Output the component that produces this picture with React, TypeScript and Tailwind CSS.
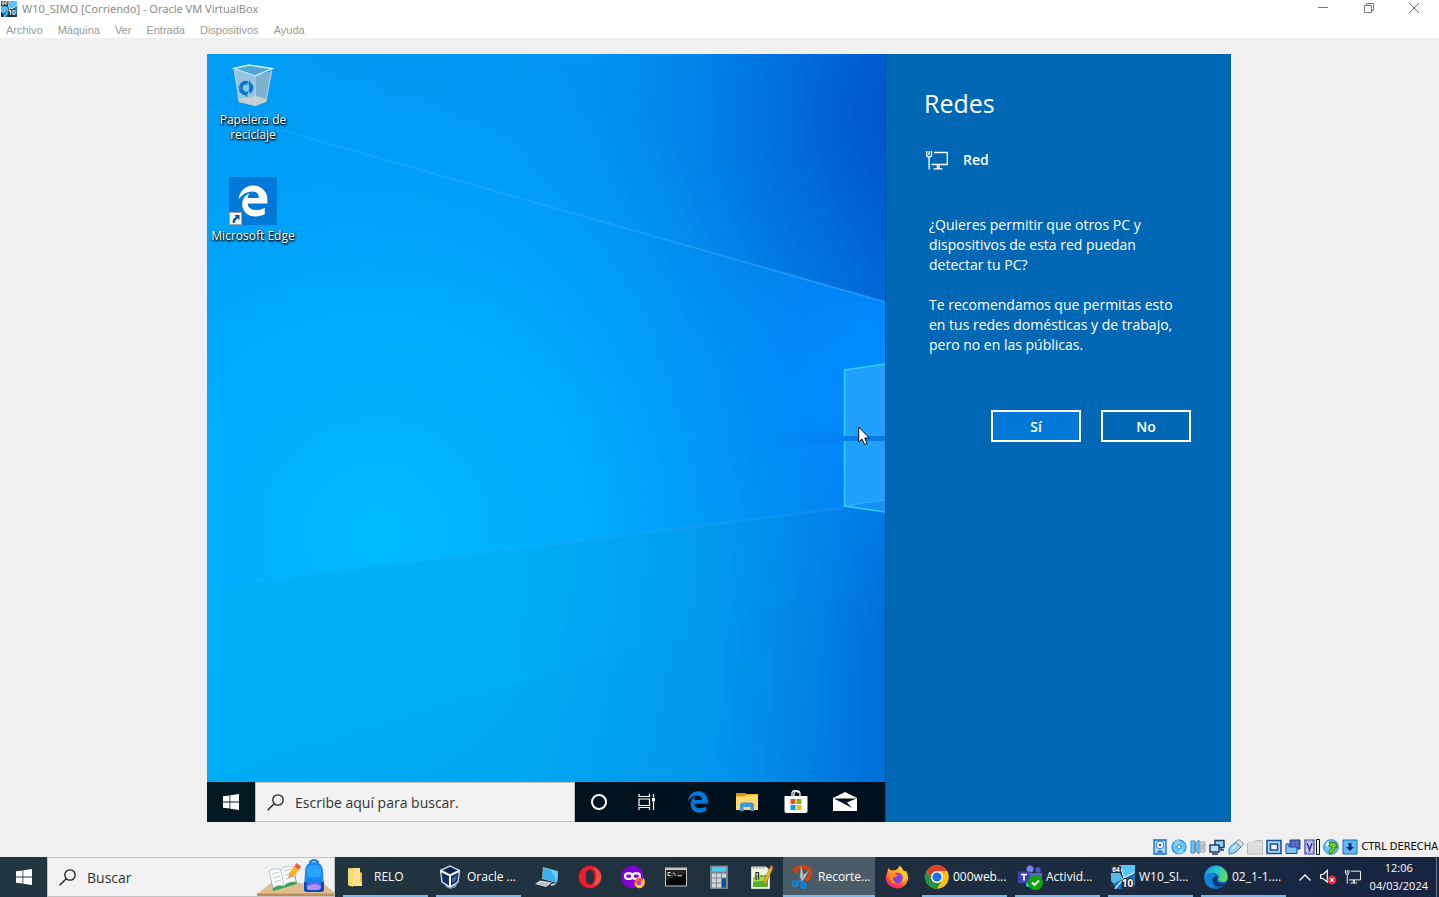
import type { ReactNode } from "react";
import { FaEdgeLegacy } from "react-icons/fa6";

type IconProps = { className?: string };

/* ---------- Shared glyphs ---------- */

function WindowsLogo({ className }: IconProps) {
  return (
    <svg viewBox="0 0 16 16" className={className} fill="currentColor" aria-hidden="true">
      <path d="M0 2.3 6.5 1.4V7.6H0zM7.3 1.3 16 0V7.6H7.3zM0 8.4H6.5V14.6L0 13.7zM7.3 8.4H16V16L7.3 14.7z" />
    </svg>
  );
}

function SearchGlyph({ className }: IconProps) {
  return (
    <svg viewBox="0 0 17 17" className={className} fill="none" stroke="currentColor" strokeWidth="1.3" aria-hidden="true">
      <circle cx="11" cy="6" r="5.2" />
      <path d="M7.2 9.7 0.6 16.3" />
    </svg>
  );
}

function NetworkGlyph({ className }: IconProps) {
  return (
    <svg viewBox="0 0 22 19" className={className} fill="none" stroke="currentColor" strokeWidth="1.3" aria-hidden="true">
      <path d="M0.7 0V4a2.400 2 0 0 0 4.800 0V0M3.100 0V4M3.100 6V18.500M8 1.500H21.300V13.500H5.500M11.500 13.500V17.500M7.500 17.800H16.500M13 13.500V17.500" />
    </svg>
  );
}

/* ---------- Wallpaper ---------- */

function Wallpaper() {
  return (
    <svg viewBox="0 0 678 728" preserveAspectRatio="none" className="absolute inset-0 h-full w-full" aria-hidden="true">
      <defs>
        <linearGradient id="base" x1="0" y1="0" x2="1" y2="0">
          <stop offset="0" stopColor="#009cf4" />
          <stop offset="0.45" stopColor="#0098f2" />
          <stop offset="0.75" stopColor="#008aec" />
          <stop offset="0.9" stopColor="#007ae2" />
          <stop offset="1" stopColor="#0066d6" />
        </linearGradient>
        <radialGradient id="cyan" gradientUnits="userSpaceOnUse" cx="170" cy="480" r="500">
          <stop offset="0" stopColor="#00baff" />
          <stop offset="0.4" stopColor="#00b0ff" stopOpacity="0.9" />
          <stop offset="0.75" stopColor="#00a4fc" stopOpacity="0.45" />
          <stop offset="1" stopColor="#009cf8" stopOpacity="0" />
        </radialGradient>
        <radialGradient id="dark" gradientUnits="userSpaceOnUse" cx="720" cy="60" r="340">
          <stop offset="0" stopColor="#004ec6" />
          <stop offset="0.35" stopColor="#005ed2" stopOpacity="0.65" />
          <stop offset="1" stopColor="#0080e8" stopOpacity="0" />
        </radialGradient>
        <radialGradient id="glow" gradientUnits="userSpaceOnUse" cx="690" cy="320" r="260">
          <stop offset="0" stopColor="#0090ff" />
          <stop offset="0.4" stopColor="#008cff" stopOpacity="0.75" />
          <stop offset="1" stopColor="#0094fa" stopOpacity="0" />
        </radialGradient>
        <linearGradient id="beam" x1="0" y1="0" x2="1" y2="0">
          <stop offset="0" stopColor="#30b4ff" stopOpacity="0.25" />
          <stop offset="0.6" stopColor="#30a8ff" stopOpacity="0.5" />
          <stop offset="1" stopColor="#2a9cff" stopOpacity="0.8" />
        </linearGradient>
        <linearGradient id="lower" x1="0" y1="0" x2="1" y2="0">
          <stop offset="0" stopColor="#00b0f6" stopOpacity="0.75" />
          <stop offset="0.45" stopColor="#00acf2" stopOpacity="0.7" />
          <stop offset="0.75" stopColor="#009aec" stopOpacity="0.6" />
          <stop offset="1" stopColor="#0074dc" stopOpacity="0.5" />
        </linearGradient>
        <linearGradient id="gap" x1="0" y1="0" x2="1" y2="0">
          <stop offset="0" stopColor="#0078e6" stopOpacity="0" />
          <stop offset="1" stopColor="#0078e6" stopOpacity="0.3" />
        </linearGradient>
      </defs>
      <rect width="678" height="728" fill="url(#base)" />
      <rect width="678" height="728" fill="url(#cyan)" />
      <rect width="678" height="728" fill="url(#dark)" />
      <path d="M0 55 678 248V728H0z" fill="url(#glow)" />
      <path d="M0 534 637 453 678 448V728H0z" fill="url(#lower)" />
      <path d="M60 705 678 521V728H0z" fill="#0080dc" opacity="0.06" />
      <path d="M0 54 678 247V249L0 56z" fill="url(#beam)" />
      <path d="M0 533 637 452V455L0 536z" fill="url(#beam)" opacity="0.4" />
      <path d="M540 378H637V391H540z" fill="url(#gap)" />
      <path d="M637 316 678 310V382H637zM637 387H678V458L637 452z" fill="#22a0ff" />
      <path d="M637 382H678V387H637z" fill="#007ee6" />
      <path d="M637 452 678 446V458z" fill="#1690f2" />
      <path d="M678 310 637.5 316V382M637.5 387V452L678 458" fill="none" stroke="#30ccff" strokeWidth="1.6" />
      <path d="M637 452 678 446" stroke="#30c0ff" strokeWidth="1" opacity="0.7" />
    </svg>
  );
}

/* ---------- Desktop icons ---------- */

function RecycleBin() {
  return (
    <svg viewBox="0 0 48 48" className="size-12" aria-hidden="true">
      <path d="M5 8 10 41 27 45 37 40 43 10 26 16z" fill="#93c4e0" />
      <path d="M25 15 27 45 37 41 43 10z" fill="#7eb0d0" />
      <path d="M9.500 38 27 35 37.500 38 37 41 26 45 10 41z" fill="#cfcfd1" opacity="0.9" />
      <path d="M5 7.500 20 4 43 7.500 26 15z" fill="#4fa6d4" />
      <path d="M5 7.500 20 4 43 7.500 26 15z" fill="none" stroke="#d9eef8" strokeWidth="1.300" />
      <path d="M5 8 10 40M43 8 37 40M26 15 26.500 44" fill="none" stroke="#c0dff0" strokeWidth="0.800" />
      <circle cx="17" cy="27" r="5.300" fill="none" stroke="#0874cc" strokeWidth="3.800" strokeDasharray="8 3.100" transform="rotate(-160 17 27)" />
      <path d="M20 19 24 25.500 19.500 24zM18 36.500 15 32.500 19 30zM8.500 26 13 24 14.500 28z" fill="#0874cc" />
    </svg>
  );
}

function DesktopShortcut({ label, children }: { label: string; children: ReactNode }) {
  return (
    <button type="button" className="flex min-h-[116px] w-[92px] flex-col items-center gap-[3px]">
      {children}
      <span className="px-1 text-center text-[12px] leading-[15px] text-white [text-shadow:1px_1px_2px_#000,0_1px_2px_#000]">
        {label}
      </span>
    </button>
  );
}

/* ---------- Guest taskbar icons ---------- */

const TaskViewIcon = () => (
  <svg viewBox="0 0 18 16" className="h-4 w-[18px]" fill="none" stroke="#fff" strokeWidth="1.200" aria-hidden="true">
    <path d="M1 0V2.500H11.500V0M1 5H11.500V11.500H1zM1 16V13.500H11.500V16M15.500 0V3.500M15.500 8V16" />
    <path d="M14 4H17V7.500H14z" fill="#fff" stroke="none" />
  </svg>
);

const ExplorerIcon = () => (
  <svg viewBox="0 0 22 18" className="h-[18px] w-[22px]" aria-hidden="true">
    <path d="M0 0H9L10 1H22V17H0z" fill="#f0b429" />
    <path d="M0 0H9L10 1.500 9 3.500H0z" fill="#d99408" />
    <path d="M0 3.500H9L10 2H22V17H0z" fill="#ffd867" />
    <path d="M4 18V11L6 9.500H16L18 11V18H14.500V14H7.500V18z" fill="#3d9ae0" />
  </svg>
);

const StoreIcon = () => (
  <svg viewBox="0 0 24 24" className="size-6" aria-hidden="true">
    <path d="M8 7V4a3 3 0 0 1 6-1M10 7V4a3 3 0 0 1 6 0V7" fill="none" stroke="#fff" strokeWidth="1.300" />
    <path d="M0.500 6H23.500V21a2 2 0 0 1-2 2H2.500a2 2 0 0 1-2-2z" fill="#fff" />
    <path d="M6.500 9H11.500V14H6.500z" fill="#f04c22" />
    <path d="M12.500 9H17.500V14H12.500z" fill="#7cb900" />
    <path d="M6.500 15H11.500V20H6.500z" fill="#00a2ec" />
    <path d="M12.500 15H17.500V20H12.500z" fill="#fdb813" />
  </svg>
);

const MailIcon = () => (
  <svg viewBox="0 0 24 20" className="h-5 w-6" aria-hidden="true">
    <path d="M0 6 12 0 24 6V19H0z" fill="#fff" />
    <path d="M1 6.500H23.500L14 10.500 19 16z" fill="#00121d" />
  </svg>
);

function GuestTaskbar() {
  return (
    <div className="relative flex h-10 items-stretch bg-linear-to-r from-[#001922] to-[#000f1c] text-white">
      <button type="button" aria-label="Inicio" className="flex w-12 items-center justify-center">
        <WindowsLogo className="size-4" />
      </button>
      <label className="flex min-w-0 max-w-[320px] flex-1 items-center border border-[#c3c3c3] bg-[#f2f2f2] pl-[11px] text-[#1c1c1c]">
        <SearchGlyph className="size-[17px] shrink-0" />
        <input
          type="text"
          aria-label="Buscar en el equipo"
          placeholder="Escribe aquí para buscar."
          className="min-w-0 flex-1 bg-transparent pl-[11px] text-[14px] outline-none placeholder:text-[#333]"
        />
      </label>
      <button type="button" aria-label="Cortana" className="flex w-12 items-center justify-center">
        <span className="size-4 rounded-full border-2 border-white" />
      </button>
      <button type="button" aria-label="Vista de tareas" className="flex w-12 items-center justify-center">
        <TaskViewIcon />
      </button>
      <button type="button" aria-label="Edge" className="ml-[3px] flex w-12 items-center justify-center">
        <FaEdgeLegacy className="size-[22px] text-[#0078d7]" />
      </button>
      <button type="button" aria-label="Explorador" className="flex w-[49px] items-center justify-center">
        <ExplorerIcon />
      </button>
      <button type="button" aria-label="Tienda" className="flex w-[49px] items-center justify-center">
        <StoreIcon />
      </button>
      <button type="button" aria-label="Correo" className="flex w-[49px] items-center justify-center">
        <MailIcon />
      </button>
    </div>
  );
}

/* ---------- Network flyout ---------- */

function NetworkPanel() {
  return (
    <aside className="border-l border-[#004f91] bg-[#0067b4] pt-[33px] pr-10 pl-[38px] text-white">
      <h1 className="text-[25px] leading-8 font-normal">Redes</h1>
      <div className="mt-[29px] flex items-center gap-[15px] pl-[2px]">
        <NetworkGlyph className="h-[19px] w-[22px]" />
        <h2 className="text-[14px] leading-6 font-semibold">Red</h2>
      </div>
      <div className="mt-[43px] flex flex-col gap-5 pl-[5px] text-[14px] leading-5">
        <p>
          ¿Quieres permitir que otros PC y<br />
          dispositivos de esta red puedan<br />
          detectar tu PC?
        </p>
        <p>
          Te recomendamos que permitas esto<br />
          en tus redes domésticas y de trabajo,<br />
          pero no en las públicas.
        </p>
      </div>
      <div className="mt-[55px] flex justify-end gap-5 text-[14px] font-semibold">
        <button type="button" className="h-8 w-[90px] border-2 border-white bg-[#0078d7]">Sí</button>
        <button type="button" className="h-8 w-[90px] border-2 border-white">No</button>
      </div>
    </aside>
  );
}

/* ---------- Machine status icons ---------- */

const statusIcons: { name: string; art: ReactNode }[] = [
  {
    name: "Disco duro",
    art: (
      <>
        <path d="M2 1H14V15H2z" fill="#a9dcfc" stroke="#1c66c4" strokeWidth="1.300" />
        <circle cx="8" cy="6" r="3.800" fill="#fff" stroke="#2e7cd0" />
        <circle cx="8" cy="6" r="1.300" fill="#1c66c4" />
        <path d="M4 13.500 8 11 12 13.500z" fill="#1c66c4" />
      </>
    ),
  },
  {
    name: "Unidad óptica",
    art: (
      <>
        <circle cx="8" cy="8" r="7" fill="#69c8fa" stroke="#2384d6" strokeWidth="1.200" />
        <path d="M8 8 3 3A7 7 0 0 1 8 1zM8 8 13 13A7 7 0 0 1 8 15z" fill="#8fd6fc" />
        <circle cx="8" cy="8" r="2" fill="#fff" stroke="#2384d6" />
      </>
    ),
  },
  {
    name: "Audio",
    art: (
      <>
        <path d="M1 2H5V14H1zM5 5 9 1V15L5 11z" fill="#72c6f6" stroke="#3e86bd" />
        <path d="M10 3H15V13H10z" fill="#d9d9d9" stroke="#a0a0a0" />
        <path d="M11 6H14M11 8H14M11 10H14" stroke="#999" />
      </>
    ),
  },
  {
    name: "Red",
    art: (
      <>
        <path d="M6 1.500H15V8.500H6z" fill="#8ad0fb" stroke="#263b65" strokeWidth="1.500" />
        <path d="M1 6H10V13H1z" fill="#b8e0fa" stroke="#263b65" strokeWidth="1.500" />
        <path d="M3 15H9M12 9V11H15" stroke="#263b65" strokeWidth="1.500" fill="none" />
      </>
    ),
  },
  {
    name: "USB",
    art: (
      <>
        <path d="M1 14Q0 10 3 7L8 3 13 8 8 13Q5 15 1 15z" fill="#90d4fa" stroke="#3588bd" />
        <path d="M8 3 11 0.500 15.500 5 13 8z" fill="#e8e8e8" stroke="#7b8a95" />
        <path d="M4 10 8 7" stroke="#fff" strokeWidth="1.500" />
      </>
    ),
  },
  {
    name: "Carpetas compartidas",
    art: (
      <>
        <path d="M0.500 4H7L9 1.500H15.500V15H0.500z" fill="#dcdcdc" stroke="#b9b9b9" />
        <path d="M1 5H15" stroke="#eee" />
      </>
    ),
  },
  {
    name: "Pantalla",
    art: (
      <>
        <path d="M1 1.500H15V14.500H1z" fill="#9edcff" stroke="#234c9a" strokeWidth="1.600" />
        <path d="M4.500 5H11.500V11H4.500z" fill="#fff" stroke="#234c9a" strokeWidth="1.600" />
      </>
    ),
  },
  {
    name: "Grabación",
    art: (
      <>
        <path d="M5 1H15V10H5z" fill="#4a62b9" stroke="#253c8c" />
        <path d="M1 5H4V8H12V14.500H1z" fill="#7ac7fa" stroke="#253c8c" />
        <path d="M8 2V7M12 2V7" stroke="#7085d7" />
      </>
    ),
  },
  {
    name: "Virtualización",
    art: (
      <>
        <path d="M1 1H10V15H1z" fill="#cfd4ff" stroke="#3939a2" strokeWidth="1.200" />
        <path d="M3 4 5.500 11 8 4" fill="none" stroke="#3434a5" strokeWidth="1.700" />
        <path d="M2 13H9M2 2.500H9" stroke="#7777c6" strokeDasharray="1 1" />
        <path d="M12.500 0.500H15.500V15.500H12.500z" fill="#e7ffe3" stroke="#111" />
      </>
    ),
  },
  {
    name: "Ratón",
    art: (
      <>
        <circle cx="8" cy="8" r="7.300" fill="#69c9f4" stroke="#2181bd" />
        <path d="M7 3 13 4 14 9 12 8Q12 13 7 15L6 12Q9 10 9 8L6 7z" fill="#75cf24" stroke="#347e0e" />
        <path d="M3 5 5 2 6 5 4 8z" fill="#e3f7ff" />
      </>
    ),
  },
  {
    name: "Teclado",
    art: (
      <>
        <path d="M1 1H15V15H1z" fill="#5eb9f6" stroke="#236ba9" />
        <path d="M6.500 4H9.500V8H12L8 12 4 8H6.500z" fill="#0a2870" />
      </>
    ),
  },
];

/* ---------- Host taskbar icons ---------- */

const FolderIcon = () => (
  <svg viewBox="0 0 24 24" className="size-6" aria-hidden="true">
    <path d="M3 3H13V6L16 8V21H3z" fill="#e8c15a" />
    <path d="M7 3H14V17L16 18V21H7z" fill="#ffe08a" />
    <path d="M2 3 7 5V22L2 20z" fill="#f7d774" />
  </svg>
);

const VirtualBoxIcon = () => (
  <svg viewBox="0 0 24 24" className="size-6" aria-hidden="true">
    <path d="M5 18 12 22 18 18 17 22 11 24 7 22z" fill="#7f97c8" />
    <path d="M11 1 20.500 5.500 19 17 11 22 3 17 1.500 5.500z" fill="#14305f" stroke="#dce5f2" strokeWidth="1.300" />
    <path d="M2 6 11 10.500 20 6M11 10.500V21" fill="none" stroke="#fff" strokeWidth="2" />
    <path d="M6 5.500 11 3 16 5.500 11 8z" fill="#0b2148" />
    <path d="M13 13 18 10 17 15 13 18z" fill="#3f65ab" />
  </svg>
);

const RemoteIcon = () => (
  <svg viewBox="0 0 24 24" className="size-6" aria-hidden="true">
    <path d="M8 2 23 6 22 18 7 14z" fill="#a5b7c4" />
    <path d="M8.500 3 23 7 22 17.500 8 13.500z" fill="#35b1f5" />
    <path d="M16 5 23 7 22 17.500z" fill="#6bcbff" />
    <path d="M5 15.500 17 17.500 11 22 0 19z" fill="#d7dde1" />
    <path d="M3 18.500 13 20.500M5 17.500 15 19" stroke="#a9b3ba" />
    <path d="M16 19 21 18 20 20 16 21z" fill="#c7cdd1" />
  </svg>
);

const OperaIcon = () => (
  <svg viewBox="0 0 24 24" className="size-6" aria-hidden="true">
    <path fillRule="evenodd" d="M12 0.700A11.300 11.300 0 1 0 12 23.300 11.300 11.300 0 0 0 12 0.700zM12 4.500C15 4.500 16.300 8 16.300 12S15 19.500 12 19.500 7.700 16 7.700 12 9 4.500 12 4.500z" fill="#ee1c2e" />
    <path d="M12 4.500C17 1.500 23.300 6 23.300 12S17 22.500 12 19.500C15 19.500 16.300 16 16.300 12S15 4.500 12 4.500z" fill="#c9232c" />
    <path d="M15 2.500C22 4 24 9 23 14 21 20 17 21 14 20.500 19 18 20 6 15 2.500z" fill="#f0504a" />
  </svg>
);

const PrivateIcon = () => (
  <svg viewBox="0 0 24 24" className="size-6" aria-hidden="true">
    <circle cx="11.500" cy="12" r="11.300" fill="#8000d7" />
    <rect x="4" y="8.300" width="7.500" height="5.600" rx="2.800" fill="none" stroke="#fff" strokeWidth="2.200" />
    <rect x="11.500" y="8.300" width="7.500" height="5.600" rx="2.800" fill="none" stroke="#fff" strokeWidth="2.200" />
    <circle cx="18.500" cy="18" r="5.300" fill="#ff6038" />
    <path d="M18 17Q23 17 22 12 26 18 21 22 17 25 13.500 20z" fill="#ffc438" />
    <circle cx="18" cy="18" r="2.300" fill="#a343d8" />
  </svg>
);

const TerminalIcon = () => (
  <svg viewBox="0 0 24 24" className="size-6" aria-hidden="true">
    <path d="M1 2.500H23V21.500H1z" fill="#c6c6c6" />
    <path d="M2 5H22V20.500H2z" fill="#050505" />
    <path d="M2 5H22V9Q10 11 2 16z" fill="#242424" />
    <path d="M6.500 7.500H4V10.500H6.500M8 8V8.500M8 10V10.500M9.500 7.500 11.500 10.500M13.500 10.800H18" stroke="#e4e4e4" fill="none" />
  </svg>
);

const CalculatorIcon = () => (
  <svg viewBox="0 0 24 24" className="size-6" aria-hidden="true">
    <rect x="3" y="0.500" width="18" height="23.500" rx="1" fill="#7c868f" />
    <path d="M5 2H19V6.500H5z" fill="#4dcaf6" />
    <path d="M5 8.500H9V12.500H5zM10 8.500H14V12.500H10zM15 8.500H19V12.500H15zM5 13.500H9V17.500H5zM10 13.500H14V17.500H10zM5 18.500H9V22.500H5zM10 18.500H14V22.500H10z" fill="#d2d7db" />
    <path d="M15 13.500H19V22.500H15z" fill="#10519c" />
  </svg>
);

const NotepadIcon = () => (
  <svg viewBox="0 0 24 24" className="size-6" aria-hidden="true">
    <path d="M1.500 2H16L19.500 5V23.500H1.500z" fill="#f2f4ed" stroke="#d4d8d0" />
    <path d="M3 5H18V14H3z" fill="#eef6da" />
    <path d="M3 12Q10 9 18 11V18H3z" fill="#a6dc45" />
    <path d="M3 17 18 15V22H3z" fill="#54ae30" />
    <path d="M6 7V15M6 7.500H8.500V14.500M10.500 11H12.500M14 11H16" stroke="#252e22" fill="none" strokeWidth="1.200" />
    <path d="M4 1V4M7 1V4M10 1V4M13 1V4" stroke="#8b958d" />
    <path d="M20.500 1.500 23 3 16.500 17 13.500 20 14 15.500z" fill="#efb820" stroke="#8c6819" strokeWidth="0.600" />
    <path d="M21 0 23.800 1.500 22.800 3.500 20 2z" fill="#c05247" />
  </svg>
);

const SnippingIcon = () => (
  <svg viewBox="0 0 24 24" className="size-6" aria-hidden="true">
    <path d="M7 8Q3.500 4 8 2.500 18 0.500 20 6 21 12 16 15.500" fill="none" stroke="#d8420a" strokeWidth="3.500" />
    <path d="M11 1 13.500 12 12.500 17 10 12zM18.500 6 13.500 15 10.500 17 13.500 10z" fill="#c5cdd1" stroke="#8b979e" strokeWidth="0.600" />
    <path d="M11 15.500 7 17.500M12.500 15.500 14 18" stroke="#0a86d8" strokeWidth="2" />
    <circle cx="5" cy="18.500" r="2.500" fill="none" stroke="#0a86d8" strokeWidth="2.200" />
    <circle cx="13.500" cy="20.800" r="2.200" fill="none" stroke="#0a86d8" strokeWidth="2.200" />
  </svg>
);

const FirefoxIcon = () => (
  <svg viewBox="0 0 24 24" className="size-6" aria-hidden="true">
    <defs>
      <linearGradient id="fox" x1="0.800" y1="0" x2="0.200" y2="1">
        <stop offset="0" stopColor="#ffe226" />
        <stop offset="0.450" stopColor="#ff9a28" />
        <stop offset="0.750" stopColor="#ff4050" />
        <stop offset="1" stopColor="#e01880" />
      </linearGradient>
    </defs>
    <path d="M3 3 6 5.500Q9 5 11 5 14 3 14.500 0.500 18 3 19 6.500L20.500 5.500Q24 10 23 15 20 23.500 12 23.500 3 23 1 15 0.500 10 2.500 7z" fill="url(#fox)" />
    <circle cx="12.500" cy="13" r="5.200" fill="#8044dd" />
    <path d="M4 8 10 8.500 13 10.500Q10 12 8 13 8 17 12 18 5 20 4.500 13z" fill="#ff8a22" />
    <path d="M15 2Q14 7 18 9 20 13 17 17 22 15 21 9z" fill="#ffcd28" />
  </svg>
);

const ChromeIcon = () => (
  <svg viewBox="0 0 24 24" className="size-6" aria-hidden="true">
    <circle cx="12" cy="12" r="11.800" fill="#fbc116" />
    <path d="M1.800 6.100A11.800 11.800 0 0 1 22.200 6.100H12A6 6 0 0 0 6.500 14.300z" fill="#e33b2e" />
    <path d="M1.800 6.100A11.800 11.800 0 0 0 12 23.800L17.200 15A6 6 0 0 1 6.900 15z" fill="#229342" />
    <circle cx="12" cy="12" r="5.900" fill="#fff" />
    <circle cx="12" cy="12" r="4.600" fill="#1a73e8" />
  </svg>
);

const TeamsIcon = () => (
  <svg viewBox="0 0 24 24" className="size-6 overflow-visible" aria-hidden="true">
    <circle cx="12" cy="4" r="3.500" fill="#7b83eb" />
    <circle cx="20" cy="5" r="2.700" fill="#5059c9" />
    <path d="M11 8H24V15Q22 20 15 20L11 18z" fill="#5b63ce" />
    <path d="M8 16H13V22H10Q8 22 8 20z" fill="#26c4db" />
    <rect x="0" y="6.500" width="12" height="11.500" rx="1" fill="#4045ad" />
    <path d="M3 9.500H9M6 9.500V15.500" stroke="#fff" strokeWidth="1.700" />
    <circle cx="17.500" cy="17.500" r="7.700" fill="#13a10e" />
    <path d="M14 17.500 16.500 20 21 15.500" stroke="#fff" strokeWidth="1.800" fill="none" />
  </svg>
);

const MachineIcon = ({ className = "size-6" }: IconProps) => (
  <svg viewBox="0 0 24 24" className={className} aria-hidden="true">
    <path d="M0 0H24V24H0z" fill="#1f3340" />
    <path d="M10 0H24V8L13 14z" fill="#5ac4ff" />
    <path d="M0 8H9L12 14 3 19 0 16z" fill="#55baf2" />
    <path d="M15 14 24 9V21L17 18zM2 20 11 15 10 24H6z" fill="#127bca" />
    <path d="M9 0 13 13 23 8M13 13 4 24M13 13 20 22" stroke="#e5f6ff" fill="none" strokeWidth="1.200" />
    <path d="M0 1H10V7H0z" fill="#333" />
    <text x="5" y="6.500" textAnchor="middle" fontSize="6.500" fontWeight="700" fill="#fff">64</text>
    <text x="16.500" y="21.500" textAnchor="middle" fontSize="10" fontWeight="700" fill="#fff" stroke="#222" strokeWidth="2" paintOrder="stroke">10</text>
  </svg>
);

const EdgeIcon = () => (
  <svg viewBox="0 0 24 24" className="size-6" aria-hidden="true">
    <defs>
      <linearGradient id="edgeTop" x1="0" y1="0.300" x2="1" y2="0.500">
        <stop offset="0" stopColor="#199be2" />
        <stop offset="0.550" stopColor="#2cc5c8" />
        <stop offset="1" stopColor="#65dc55" />
      </linearGradient>
    </defs>
    <circle cx="12" cy="12" r="11.800" fill="#0b62b8" />
    <path d="M0.300 11.500A11.800 11.800 0 0 1 23.800 11.500Q24 17 18.500 17 14 17 14 14.500 16 12 13.500 9.500 10 7 5 9 1 10.500 0.300 14z" fill="url(#edgeTop)" />
    <path d="M8.500 13.500Q8 20 15 21.500 19 22 22 18.500 17 20 13 16 12 14 13.500 12 11 9.500 8.500 13.500z" fill="#15336b" />
    <path d="M0.300 13Q1 8 7 8.500 11 9 12 11 8 12 8.500 17 9 22 14 23.600 1 25 0.300 13z" fill="#1480d6" />
  </svg>
);

type TaskProps = { label: string; icon: ReactNode; active?: boolean };

function AppTask({ label, icon, active = false }: TaskProps) {
  return (
    <button
      type="button"
      className={
        active
          ? "relative flex w-[92px] items-center gap-1 bg-[#4b5c67] pl-[7px]"
          : "relative flex w-[93px] items-center gap-1 pl-[7px]"
      }
    >
      {icon}
      <span className="text-[12px] leading-4 whitespace-nowrap">{label}</span>
      <span className={active ? "absolute inset-x-0 bottom-0 h-[2px] bg-[#76b9ed]" : "absolute inset-x-1 bottom-0 h-[2px] bg-[#76b9ed]"} />
    </button>
  );
}

function PinnedTask({ label, icon }: TaskProps) {
  return (
    <button type="button" aria-label={label} className="flex w-[43px] items-center justify-center">
      {icon}
    </button>
  );
}

function SearchArt() {
  return (
    <svg viewBox="0 0 77 38" className="h-[38px] w-[77px] shrink-0" aria-hidden="true">
      <path d="M14 25H66L79 36V38H0V36z" fill="#e2bd8d" />
      <path d="M0 35.500H79V38H0z" fill="#bd8f5d" />
      <path d="M13 15 37 10 40 26 16 33z" fill="#36a352" />
      <path d="M12 13Q19 9 24 12 29 6 36 9L39 24Q31 23 27 28 21 26 16 30z" fill="#fafcff" stroke="#aab4ce" strokeWidth="0.800" />
      <path d="M24 12 27 28M15 16 22 14M16 20 23 18M17 24 24 22M27 13 34 11M28 17 35 15M29 21 36 19" stroke="#b4bccd" strokeWidth="0.900" />
      <path d="M31 20 32.500 14.500 37.500 18z" fill="#e8a050" />
      <path d="M32.500 14.500 37.500 8 41.500 12 37 18z" fill="#ffb41c" />
      <path d="M37.500 8 39.500 5 44 8.500 41.500 12z" fill="#ed584f" />
      <path d="M53 6V4Q57 0 61 4V6" fill="none" stroke="#1474db" strokeWidth="2" />
      <path d="M48 14Q48 4 57 4T66 14L67 31Q67 34 64 34H50Q47 34 47 31z" fill="#1687f5" />
      <path d="M50 9Q57 5 64 9V18Q57 21 50 18z" fill="#2ba4fd" />
      <path d="M47 24V31Q47 34 50 34H64Q67 34 67 31V24z" fill="#064dbe" />
      <path d="M50 23H64V28Q59 32 50 28z" fill="#3c6cf0" />
      <path d="M50 28Q57 24 64 28V30Q63 32 61 32H53Q50 32 50 30z" fill="#b78cf0" />
    </svg>
  );
}

function HostTaskbar() {
  return (
    <footer className="flex h-10 items-stretch bg-linear-to-r from-[#203840] via-[#20313e] to-[#182440] text-white">
      <button type="button" aria-label="Inicio" className="flex w-[47px] items-center justify-center">
        <WindowsLogo className="size-4" />
      </button>
      <label className="flex w-[288px] items-center border border-[#c3c3c3] bg-[#f2f2f2] pl-[11px] text-[#1c1c1c]">
        <SearchGlyph className="size-[17px] shrink-0" />
        <input
          type="text"
          aria-label="Buscar en Windows"
          placeholder="Buscar"
          className="min-w-0 flex-1 bg-transparent pl-[11px] text-[14px] outline-none placeholder:text-[#333]"
        />
        <SearchArt />
      </label>
      <nav aria-label="Aplicaciones" className="flex items-stretch pl-1">
        <AppTask label="RELO" icon={<FolderIcon />} />
        <AppTask label="Oracle ..." icon={<VirtualBoxIcon />} />
        <PinnedTask label="Escritorio remoto" icon={<RemoteIcon />} />
        <PinnedTask label="Opera" icon={<OperaIcon />} />
        <PinnedTask label="Navegación privada" icon={<PrivateIcon />} />
        <PinnedTask label="Símbolo del sistema" icon={<TerminalIcon />} />
        <PinnedTask label="Calculadora" icon={<CalculatorIcon />} />
        <PinnedTask label="Editor" icon={<NotepadIcon />} />
        <AppTask label="Recorte..." icon={<SnippingIcon />} active />
        <PinnedTask label="Firefox" icon={<FirefoxIcon />} />
        <AppTask label="000web..." icon={<ChromeIcon />} />
        <AppTask label="Activid..." icon={<TeamsIcon />} />
        <AppTask label="W10_SI..." icon={<MachineIcon />} />
        <AppTask label="02_1-1...." icon={<EdgeIcon />} />
      </nav>
      <div className="ml-auto flex items-center">
        <button type="button" aria-label="Iconos ocultos" className="mr-[9px]">
          <svg viewBox="0 0 12 7" className="h-[7px] w-3" fill="none" stroke="#fff" strokeWidth="1.300">
            <path d="M0.500 6.500 6 1 11.500 6.500" />
          </svg>
        </button>
        <button type="button" aria-label="Volumen" className="mr-2">
          <svg viewBox="0 0 17 16" className="h-4 w-[17px]">
            <path d="M0.700 5.500H3L7.300 1.500V13L3 9.500H0.700z" fill="none" stroke="#fff" strokeWidth="1.200" />
            <circle cx="12" cy="11" r="4.500" fill="#e02b33" />
            <path d="M10.200 9.200 13.800 12.800M13.800 9.200 10.200 12.800" stroke="#fff" strokeWidth="1.200" />
          </svg>
        </button>
        <button type="button" aria-label="Red" className="mr-[9px]">
          <NetworkGlyph className="h-[14px] w-4" />
        </button>
        <time className="text-center text-[11px] leading-[18px]">
          12:06
          <br />
          04/03/2024
        </time>
        <span className="mr-[2px] ml-2 h-10 w-px bg-[#6c7789]" />
      </div>
    </footer>
  );
}

/* ---------- Host window ---------- */

const menus = ["Archivo", "Máquina", "Ver", "Entrada", "Dispositivos", "Ayuda"];

export default function App() {
  return (
    <div className="flex min-h-screen flex-col bg-[#f0f0f0] font-['Open_Sans','Noto_Sans',sans-serif]">
      <header className="bg-white">
        <div className="flex h-[18px] items-center">
          <MachineIcon className="ml-px size-4" />
          <span className="ml-[5px] font-['Noto_Sans','Open_Sans',sans-serif] text-[11px] leading-4 text-[#8c8c8c]">
            W10_SIMO [Corriendo] - Oracle VM VirtualBox
          </span>
          <div className="ml-auto flex self-start pr-[2px] text-[#777]">
            <button type="button" aria-label="Minimizar" className="flex h-[15px] w-[46px] items-center justify-center">
              <span className="h-px w-[10px] bg-[#777]" />
            </button>
            <button type="button" aria-label="Restaurar" className="flex h-[15px] w-[45px] items-center justify-center">
              <svg viewBox="0 0 10 10" className="size-[10px]" fill="none" stroke="currentColor">
                <path d="M0.500 2.500H7.500V9.500H0.500zM2.500 2.500V0.500H9.500V7.500H7.500" />
              </svg>
            </button>
            <button type="button" aria-label="Cerrar" className="flex h-[15px] w-[46px] items-center justify-center">
              <svg viewBox="0 0 10 10" className="size-[10px]" fill="none" stroke="currentColor">
                <path d="M0 0 10 10M10 0 0 10" />
              </svg>
            </button>
          </div>
        </div>
        <nav aria-label="Menú" className="flex h-5 items-start gap-[15px] pl-[6px] font-['Liberation_Sans',Arial,sans-serif] text-[11px] text-[#999]">
          {menus.map((m) => (
            <button type="button" key={m} className="leading-6">
              {m}
            </button>
          ))}
        </nav>
      </header>

      <main className="flex flex-1 justify-center pt-4 pr-px pb-[15px]">
        <section aria-label="Máquina virtual" className="grid w-full max-w-[1024px] grid-cols-[1fr_346px]">
          <div className="flex min-w-0 flex-col">
            <div className="relative flex-1 overflow-hidden">
              <Wallpaper />
              <div className="relative flex w-[92px] flex-col pt-[7px]">
                <DesktopShortcut label="Papelera de reciclaje">
                  <RecycleBin />
                </DesktopShortcut>
                <DesktopShortcut label="Microsoft Edge">
                  <span className="relative flex size-12 items-center justify-center bg-[#0078d7] text-white">
                    <FaEdgeLegacy className="size-8" />
                    <svg viewBox="0 0 13 13" className="absolute bottom-0 left-0 size-[13px]" aria-hidden="true">
                      <path d="M0.500 0.500H12.500V12.500H0.500z" fill="#f6f6f6" stroke="#a5a5a5" />
                      <path d="M4 11Q2.500 7 7 5L5.500 3H10.500V8L9 6.500Q6 7 6 11z" fill="#1c4b9b" />
                    </svg>
                  </span>
                </DesktopShortcut>
              </div>
              <svg viewBox="0 0 12 20" className="absolute top-[372px] right-[15px] h-5 w-3" aria-hidden="true">
                <path d="M0.700 1V16L4 13 6.500 18.500 9 17.300 6.700 12H11.300z" fill="#fff" stroke="#111" />
              </svg>
            </div>
            <GuestTaskbar />
          </div>
          <NetworkPanel />
        </section>
      </main>

      <div className="flex h-5 items-center justify-end gap-[3px] pr-px">
        {statusIcons.map((s) => (
          <svg key={s.name} viewBox="0 0 16 16" role="img" aria-label={s.name} className="size-4">
            {s.art}
          </svg>
        ))}
        <span className="font-['DejaVu_Sans_Condensed','DejaVu_Sans',sans-serif] text-[11px] leading-4 text-black">CTRL DERECHA</span>
      </div>

      <HostTaskbar />
    </div>
  );
}
